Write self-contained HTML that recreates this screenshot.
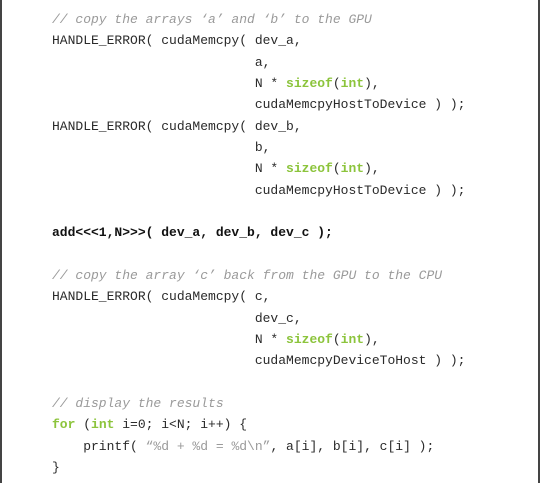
<!DOCTYPE html>
<html><head><style>
html,body{margin:0;padding:0;background:#fff;}
body{width:540px;height:483px;position:relative;overflow:hidden;}
.bl{position:absolute;left:0;top:0;width:2px;height:483px;background:#444;}
.br{position:absolute;right:0;top:0;width:2px;height:483px;background:#444;}
pre{position:absolute;left:52px;top:9px;margin:0;font-family:"Liberation Mono",monospace;font-size:13px;line-height:21.33px;color:#2a2a2a;}
.c{color:#9a9a9a;font-style:italic;}
.k{color:#8cc43c;font-weight:bold;}
.s{color:#9a9a9a;}
b{font-weight:bold;color:#111;}
</style></head><body>
<div class="bl"></div><div class="br"></div>
<pre><span class="c">// copy the arrays ‘a’ and ‘b’ to the GPU</span>
HANDLE_ERROR( cudaMemcpy( dev_a,
                          a,
                          N * <span class="k">sizeof</span>(<span class="k">int</span>),
                          cudaMemcpyHostToDevice ) );
HANDLE_ERROR( cudaMemcpy( dev_b,
                          b,
                          N * <span class="k">sizeof</span>(<span class="k">int</span>),
                          cudaMemcpyHostToDevice ) );

<b>add&lt;&lt;&lt;1,N&gt;&gt;&gt;( dev_a, dev_b, dev_c );</b>

<span class="c">// copy the array ‘c’ back from the GPU to the CPU</span>
HANDLE_ERROR( cudaMemcpy( c,
                          dev_c,
                          N * <span class="k">sizeof</span>(<span class="k">int</span>),
                          cudaMemcpyDeviceToHost ) );

<span class="c">// display the results</span>
<span class="k">for</span> (<span class="k">int</span> i=0; i&lt;N; i++) {
    printf( <span class="s">“%d + %d = %d\n”</span>, a[i], b[i], c[i] );
}</pre>
</body></html>
